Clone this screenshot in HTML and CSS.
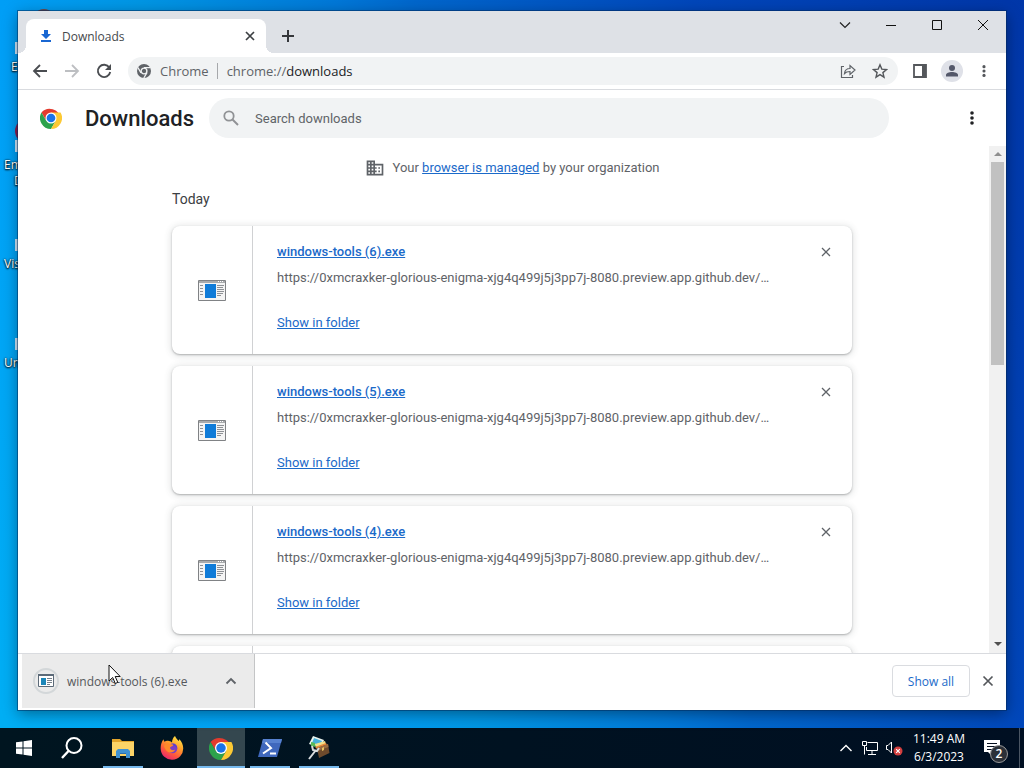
FILE: index.html
```html
<!DOCTYPE html>
<html lang="en">
    <head>
        <meta charset="UTF-8">
        <meta name="viewport" content="width=device-width, initial-scale=1.0">
        <title>Downloads</title>
        <link rel="stylesheet" href="styles.css">
    </head>
    <body>
        <!-- shared icons -->
        <svg class="defs" width="0" height="0">
            <symbol id="chrome" viewBox="0 0 48 48">
                <path fill="#e33b2e" d="M24 24H44.8A24 24 0 0 0 3.2 12L13.6 30z"/>
                <path fill="#2da24c" d="M13.6 30 3.2 12A24 24 0 0 0 24 48L34.4 30z"/>
                <path fill="#fcc934" d="M24 12H44.8A24 24 0 0 1 24 48L34.4 30z"/>
                <circle cx="24" cy="24" r="12" fill="#fff"/>
                <circle cx="24" cy="24" r="9.5" fill="#1a73e8"/>
            </symbol>
            <symbol id="exe" viewBox="0 0 28 21">
                <path fill="#f4f4f4" stroke="#808285" d="M.5.5h27v20H.5z"/>
                <path fill="#a9abad" d="M1 1h26v2H1z"/>
                <path fill="#fff" d="M20 1h1v1h-1zM22 1h1v1h-1zM24 1h1v1h-1z"/>
                <path fill="#0f7bd8" d="M7 4h11v14H7z"/>
                <path stroke="#8d9094" d="M2 5.5h3M2 8.5h3M2 11.5h3M2 14.5h3M19 5.5h7M19 7.5h6M19 9.5h7M19 11.5h7M19 13.5h6M19 15.5h4"/>
            </symbol>
            <symbol id="dots" viewBox="0 0 16 16">
                <circle cx="8" cy="3" r="1.8"/><circle cx="8" cy="8" r="1.8"/><circle cx="8" cy="13" r="1.8"/>
            </symbol>
            <symbol id="cross" viewBox="0 0 10 10">
                <path d="M1 1l8 8M9 1L1 9" fill="none" stroke="currentColor" stroke-width="1.3"/>
            </symbol>
        </svg>

        <div class="desktop">
            <svg class="app-icon app-icon-1" width="24" height="24"><circle cx="12" cy="12" r="12" fill="#6b4a4e"/></svg>
            <svg class="app-icon app-icon-2" width="24" height="24"><circle cx="12" cy="12" r="12" fill="#8c1d4f"/></svg>
            <div class="shortcut shortcut-1"><i></i>Ex</div>
            <div class="shortcut shortcut-2"><i></i>Em<br><span>D</span></div>
            <div class="shortcut shortcut-3"><i></i>Vis</div>
            <div class="shortcut shortcut-4"><i></i>Un</div>

            <div class="window">
                <div class="titlebar">
                    <div class="tab">
                        <svg width="12" height="14" viewBox="0 0 12 14"><path fill="#1967d2" d="M4 1h4v4h3L6 10 1 5h3zM1 11h10v2H1z"/></svg>
                        <span>Downloads</span>
                        <button aria-label="Close tab"><svg width="10" height="10" viewBox="0 0 10 10"><path d="M1 1l8 8M9 1L1 9" stroke="#3c4043" stroke-width="1.700"/></svg></button>
                    </div>
                    <button class="new-tab" aria-label="New tab"><svg width="14" height="14"><path d="M7 1v12M1 7h12" stroke="#35373b" stroke-width="2"/></svg></button>
                    <div class="controls">
                        <button aria-label="Search tabs"><svg width="12" height="12"><path d="M1 3.500l5 5 5-5" fill="none" stroke="#222" stroke-width="1.200"/></svg></button>
                        <button aria-label="Minimize"><svg width="12" height="12"><path d="M1 6.500h10" stroke="#111"/></svg></button>
                        <button aria-label="Maximize"><svg width="12" height="12"><path d="M1.500 1.500h9v9h-9z" fill="none" stroke="#111"/></svg></button>
                        <button aria-label="Close"><svg width="12" height="12"><path d="M1 1l10 10M11 1L1 11" stroke="#111"/></svg></button>
                    </div>
                </div>

                <div class="toolbar">
                    <button aria-label="Back"><svg width="16" height="16"><path d="M15 8H2M8 2L2 8l6 6" fill="none" stroke="#4a4d51" stroke-width="1.800"/></svg></button>
                    <button aria-label="Forward" disabled><svg width="16" height="16"><path d="M1 8h13M8 2l6 6-6 6" fill="none" stroke="#bdbfc2" stroke-width="1.800"/></svg></button>
                    <button aria-label="Reload"><svg width="16" height="16"><path d="M13.300 4.500A6.200 6.200 0 1 0 14.200 9" fill="none" stroke="#4a4d51" stroke-width="1.900"/><path d="M15 1v6H9z" fill="#4a4d51"/></svg></button>
                    <div class="omnibox">
                        <svg width="16" height="16" viewBox="0 0 16 16"><circle cx="8" cy="8" r="7" fill="#5f6368"/><circle cx="8" cy="8" r="2.900" fill="none" stroke="#f1f3f4" stroke-width="1.400"/><path d="M8 4.600h6.500M5 9.800L1.900 4.500M11 9.700L7.800 15" stroke="#f1f3f4" stroke-width="1.300"/></svg>
                        <span class="origin">Chrome</span>
                        <span class="url">chrome://<b>downloads</b></span>
                        <button aria-label="Share"><svg width="16" height="16"><path d="M4 3.500H1.500v11h11V12M4.500 10.500c.3-3 2-5 5.500-5V2.500l5 4.500-5 4.500v-3c-2.500 0-4.200.5-5.500 2z" fill="none" stroke="#5f6368" stroke-width="1.200"/></svg></button>
                        <button aria-label="Bookmark this tab"><svg width="16" height="16"><path d="M8 1.800l1.800 4.300 4.700.4-3.600 3.100 1.100 4.600L8 11.700l-4 2.500 1.100-4.600-3.600-3.100 4.700-.4z" fill="none" stroke="#54575b" stroke-width="1.400"/></svg></button>
                    </div>
                    <button aria-label="Side panel"><svg width="14" height="14"><path d="M1 1h12v12H1z" fill="none" stroke="#54575b" stroke-width="1.800"/><path d="M9 1h4v12H9z" fill="#54575b"/></svg></button>
                    <button class="avatar" aria-label="Profile"><svg width="22" height="22"><circle cx="11" cy="11" r="11" fill="#dfe1e8"/><circle cx="11" cy="8" r="3" fill="#54586a"/><path d="M5 16.500v-1.500c0-2 3-3 6-3s6 1 6 3v1.500z" fill="#54586a"/></svg></button>
                    <button aria-label="Menu"><svg width="16" height="14" fill="#54575b"><use href="#dots"/></svg></button>
                </div>

                <header class="page-header">
                    <svg width="24" height="24"><use href="#chrome" x="1" y="1" width="22" height="22"/></svg>
                    <h1>Downloads</h1>
                    <label class="search">
                        <svg width="16" height="16"><circle cx="6" cy="6" r="4.700" fill="none" stroke="#909295" stroke-width="1.800"/><path d="M9.500 9.500l5.500 5.500" stroke="#909295" stroke-width="2"/></svg>
                        <input type="search" placeholder="Search downloads" aria-label="Search downloads">
                    </label>
                    <button aria-label="More actions"><svg width="16" height="16" fill="#202124"><use href="#dots"/></svg></button>
                </header>

                <div class="page">
                    <main class="list">
                        <p class="managed">
                            <svg width="20" height="20" viewBox="0 0 24 24"><path fill="#5f6368" d="M12 7V3H2v18h20V7H12zM6 19H4v-2h2v2zm0-4H4v-2h2v2zm0-4H4V9h2v2zm0-4H4V5h2v2zm4 12H8v-2h2v2zm0-4H8v-2h2v2zm0-4H8V9h2v2zm0-4H8V5h2v2zm10 12h-8v-2h2v-2h-2v-2h2v-2h-2V9h8v10zm-2-8h-2v2h2v-2zm0 4h-2v2h2v-2z"/></svg>
                            <span>Your <a href="#">browser is managed</a> by your organization</span>
                        </p>
                        <h2>Today</h2>
                        <article class="card">
                            <div class="file-icon"><svg width="28" height="21"><use href="#exe"/></svg></div>
                            <div class="details">
                                <a class="name" href="#">windows-tools (6).exe</a>
                                <span class="source">https://0xmcraxker-glorious-enigma-xjg4q499j5j3pp7j-8080.preview.app.github.dev/…</span>
                                <a class="show" href="#">Show in folder</a>
                            </div>
                            <button aria-label="Remove from list"><svg width="10" height="10"><use href="#cross"/></svg></button>
                        </article>
                        <article class="card">
                            <div class="file-icon"><svg width="28" height="21"><use href="#exe"/></svg></div>
                            <div class="details">
                                <a class="name" href="#">windows-tools (5).exe</a>
                                <span class="source">https://0xmcraxker-glorious-enigma-xjg4q499j5j3pp7j-8080.preview.app.github.dev/…</span>
                                <a class="show" href="#">Show in folder</a>
                            </div>
                            <button aria-label="Remove from list"><svg width="10" height="10"><use href="#cross"/></svg></button>
                        </article>
                        <article class="card">
                            <div class="file-icon"><svg width="28" height="21"><use href="#exe"/></svg></div>
                            <div class="details">
                                <a class="name" href="#">windows-tools (4).exe</a>
                                <span class="source">https://0xmcraxker-glorious-enigma-xjg4q499j5j3pp7j-8080.preview.app.github.dev/…</span>
                                <a class="show" href="#">Show in folder</a>
                            </div>
                            <button aria-label="Remove from list"><svg width="10" height="10"><use href="#cross"/></svg></button>
                        </article>
                        <article class="card">
                            <div class="file-icon"></div>
                        </article>
                    </main>
                    <div class="scrollbar">
                        <svg width="17" height="16"><path d="M5 10h8L9 6z" fill="#8f8f8f"/></svg>
                        <div class="thumb"></div>
                        <svg width="17" height="16"><path d="M5 5h8L9 9z" fill="#505050"/></svg>
                    </div>
                </div>

                <footer class="shelf">
                    <div class="item">
                        <svg width="26" height="26"><circle cx="13" cy="13" r="12" fill="none" stroke="#d3d7d9" stroke-width="2"/><path d="M5.500 6.500h15v12h-15z" fill="#fff" stroke="#5c6a78"/><path d="M5 6h16v2H5z" fill="#5c6a78"/><path d="M8 10h5v7H8z" fill="#1c86b8"/><path d="M14 10.500h5M14 12.500h5M14 14.500h5M14 16.500h3" stroke="#75808b"/></svg>
                        <a href="#">windows-tools (6).exe</a>
                        <button aria-label="Options"><svg width="12" height="12"><path d="M1.500 8.500L6 4l4.500 4.500" fill="none" stroke="#5f6368" stroke-width="1.800"/></svg></button>
                    </div>
                    <button class="show-all">Show all</button>
                    <button aria-label="Close shelf"><svg width="12" height="12"><path d="M1.500 1.500l9 9M10.500 1.500l-9 9" stroke="#54575b" stroke-width="1.700"/></svg></button>
                </footer>
            </div>

            <svg class="cursor" width="14" height="21"><path d="M1 1v16l3.700-3.500 2.600 6 2.500-1.100-2.600-5.900h5z" fill="#fff" stroke="#111"/></svg>
        </div>

        <nav class="taskbar">
            <button aria-label="Start"><svg width="16" height="16" fill="#fff"><path d="M0 2.300L6.500 1.400v6.100H0zM7.500 1.200L16 0v7.500H7.500zM0 8.500h6.500v6.100L0 13.700zM7.500 8.500H16V16l-8.500-1.200z"/></svg></button>
            <button aria-label="Search"><svg width="24" height="24"><circle cx="14" cy="9.500" r="7.500" fill="none" stroke="#fff" stroke-width="2"/><path d="M8.500 15L2 22" stroke="#fff" stroke-width="2.400"/></svg></button>
            <div class="apps">
                <button class="running" aria-label="File Explorer"><svg width="22" height="20"><path fill="#e3a52b" d="M0 1h8l2 2h12v15H0z"/><path fill="#fcd467" d="M0 4h22v14H0z"/><path fill="#3f92d2" d="M4 20v-7l2-2h10l2 2v7h-4v-4H8v4z"/><path fill="#2b6fae" d="M8 15h6v1H8z"/></svg></button>
                <button aria-label="Firefox"><svg width="24" height="24">
                    <defs>
                        <linearGradient id="fox" x1=".85" y1="0" x2=".3" y2="1"><stop offset="0" stop-color="#fff04a"/><stop offset=".4" stop-color="#ffa02a"/><stop offset=".7" stop-color="#ff5a3c"/><stop offset="1" stop-color="#e8256f"/></linearGradient>
                    </defs>
                    <path fill="url(#fox)" d="M15 0c1.200 2.500 2.600 3.600 3.600 5 .6-.6.700-1.200.6-2 2.500 2.300 4 5.800 4 9.200A11.200 11.200 0 0 1 .7 13C.5 9.500 1.300 6 3.500 3.200c.1 1.100.5 2 1.100 2.600C5.600 4.700 7.300 4.400 9 5c1.400.2 2.300.8 3 1.500C12 4 13 1.500 15 0z"/>
                    <circle cx="12.500" cy="12.500" r="4.800" fill="#7a3fc4"/>
                    <path fill="#5b3fd0" d="M11 8c3-1.500 6.500.8 6.300 4.500-1-2-3-3-5-3z"/>
                    <path fill="#ff8a2a" d="M4 10c1.500-2.600 4.600-3.200 7-1.700 1.300 0 2.600.4 2.200 1.300-.9.900-2.700 1-3.200 2.200.3 2 2.500 3.200 5 2-1.200 3.200-6.300 3.900-9 .4C5 13 4.300 11.500 4 10z"/>
                </svg></button>
                <button class="running active" aria-label="Google Chrome"><svg width="24" height="24"><use href="#chrome"/></svg></button>
                <button class="running" aria-label="PowerShell"><svg width="24" height="20"><path fill="#3f68bd" d="M5 1h19l-5 18H0z"/><path fill="#5681d0" d="M5 1h19l-1 4H4z"/><path d="M7.500 4.500L13 10l-8 5.500M12 15.500h6" fill="none" stroke="#fff" stroke-width="2"/></svg></button>
                <button class="running" aria-label="Tools"><svg width="22" height="24">
                    <path fill="#e9f3ee" d="M5 0l11 4-3 8L1 8z"/>
                    <path fill="#46b0dc" d="M6 2l8 3-2 4-8-2z"/>
                    <path fill="#58b957" d="M3 6l4 1 1 4-5-1z"/>
                    <path fill="#f0e08a" d="M7 8l10-3 1 3-9 4z"/>
                    <path fill="#e8893a" d="M7 11l11-4 1 2-10 4z"/>
                    <path fill="#6d4a2c" d="M9 12l11-4 1.500 9L11 22z"/>
                    <path fill="#9a6c40" d="M9 12l11-4 .5 3L9.500 15z"/>
                    <path fill="#e8c460" d="M14 12l2-1v3l-2 1z"/>
                    <path d="M1 23l7-9M4 10l1 4 4 1 2-3" fill="none" stroke="#d9dcde" stroke-width="2"/>
                </svg></button>
            </div>
            <div class="tray">
                <button aria-label="Show hidden icons"><svg width="14" height="10"><path d="M1.500 8L7 2.500 12.500 8" fill="none" stroke="#fff" stroke-width="1.400"/></svg></button>
                <button aria-label="Network"><svg width="16" height="14"><path d="M5.500 1.500h10v8h-11V6M10 10v3M6 13.500h8M.5.500h4v4h-4zM2.500 4.500v9" fill="none" stroke="#fff"/></svg></button>
                <button aria-label="Volume"><svg width="18" height="16"><path d="M1.500 5.500H3L6.500 2v11L3 9.500H1.500z" fill="none" stroke="#fff"/><circle cx="13" cy="11" r="4.500" fill="#d33f3f"/><path d="M11.200 9.200l3.600 3.600M14.800 9.200l-3.600 3.600" stroke="#fff" stroke-width="1.200"/></svg></button>
                <time class="clock"><span>11:49 AM</span><span>6/3/2023</span></time>
                <button class="notifications" aria-label="Notifications"><svg width="16" height="16"><path d="M0 0h16v12H8v4l-4-4H0z" fill="#fff"/><path d="M3 3.500h10M3 6.500h10M3 9.500h6" stroke="#06101f"/></svg><span>2</span></button>
                <button class="peek" aria-label="Show desktop"></button>
            </div>
        </nav>
    </body>
</html>
```
FILE: styles.css
```css
:root {
    --system-font: "Open Sans", "Noto Sans", sans-serif;
    --page-font: Roboto, "Liberation Sans", sans-serif;
    --link: #1b6ac9;
    --gray: #5f6368;
}
* {
    box-sizing: border-box;
}
body {
    margin: 0;
    height: 100vh;
    display: flex;
    flex-direction: column;
    overflow: hidden;
    font-family: var(--system-font);
    font-size: 12px;
    background: linear-gradient(65deg, #00aef4 2%, #009ef6 26%, #0096e4 36%, #0078d8 50%, #0066cc 56%, #0046ba 76%, #0036a8 100%);
}
button {
    display: flex;
    align-items: center;
    justify-content: center;
    padding: 0;
    border: 0;
    background: none;
    font: inherit;
    color: #3c4043;
}
svg {
    flex: none;
    display: block;
}
.defs {
    position: absolute;
}

/* desktop */
.desktop {
    flex: 1;
    min-height: 0;
    position: relative;
}
.shortcut {
    position: absolute;
    left: 4px;
    color: #fff;
    line-height: 16px;
    text-shadow: 0 1px 2px #000, 0 0 2px #000;
}
.shortcut i {
    display: block;
    width: 4px;
    height: 12px;
    margin: 0 0 5px 11px;
    background: #cfe6f8;
}
.shortcut span {
    margin-left: 10px;
}
.shortcut-1 {
    top: 42px;
    left: 11px;
}
.shortcut-1 i {
    margin-left: 4px;
}
.shortcut-2 {
    top: 140px;
}
.shortcut-3 {
    top: 239px;
}
.shortcut-4 {
    top: 338px;
}
.app-icon {
    position: absolute;
}
.app-icon-1 {
    left: 32px;
    top: 9px;
}
.app-icon-2 {
    left: 15px;
    top: 119px;
}
.window {
    position: absolute;
    inset: 11px 18px 18px;
    display: flex;
    flex-direction: column;
    background: #fff;
    box-shadow: 0 0 0 1px rgba(0, 40, 90, 0.5), 0 4px 14px rgba(0, 0, 0, 0.4);
}
.cursor {
    position: absolute;
    left: 108px;
    top: 664px;
}

/* tab strip */
.titlebar {
    display: flex;
    align-items: flex-end;
    height: 42px;
    padding-left: 8px;
    background: #dee1e6;
}
.tab {
    position: relative;
    display: flex;
    align-items: center;
    width: 240px;
    height: 34px;
    padding: 0 11px 0 14px;
    border-radius: 8px 8px 0 0;
    background: #fff;
    color: #45484c;
}
.tab::before,
.tab::after {
    content: "";
    position: absolute;
    bottom: 0;
    left: -8px;
    width: 8px;
    height: 8px;
    background: radial-gradient(circle at 0 0, #dee1e6 8px, #fff 8px);
}
.tab::after {
    left: auto;
    right: -8px;
    background: radial-gradient(circle at 100% 0, #dee1e6 8px, #fff 8px);
}
.tab span {
    flex: 1;
    margin-left: 10px;
}
.new-tab {
    width: 28px;
    height: 34px;
    margin-left: 8px;
}
.controls {
    display: flex;
    align-self: flex-start;
    margin-left: auto;
}
.controls button {
    width: 46px;
    height: 28px;
}

/* toolbar */
.toolbar {
    display: flex;
    align-items: center;
    height: 37px;
    padding: 0 6px;
    border-bottom: 1px solid #d9dbdf;
}
.toolbar button {
    width: 32px;
    height: 28px;
}
.omnibox {
    flex: 1;
    display: flex;
    align-items: center;
    height: 28px;
    margin: 0 6px 0 8px;
    padding: 0 2px 0 8px;
    border-radius: 14px;
    background: #f1f3f4;
    font-size: 13px;
    color: var(--gray);
}
.origin {
    margin-left: 8px;
    padding-right: 8px;
    border-right: 1px solid #a6a8ab;
    line-height: 16px;
}
.url {
    flex: 1;
    margin-left: 9px;
}
.url b {
    font-weight: normal;
    color: #202124;
}

/* downloads page */
.page-header {
    display: flex;
    align-items: center;
    height: 56px;
    padding: 0 18px 0 21px;
    font-family: var(--page-font);
}
.page-header h1 {
    margin: 0 15px 0 22px;
    font-size: 22px;
    font-weight: 500;
    color: #202124;
}
.page-header button {
    width: 32px;
    height: 32px;
    margin-left: auto;
}
.search {
    flex: 0 1 680px;
    display: flex;
    align-items: center;
    height: 40px;
    padding: 0 14px;
    border-radius: 20px;
    background: #f1f3f4;
}
.search input {
    flex: 1;
    margin-left: 16px;
    padding: 0;
    border: 0;
    outline: 0;
    background: none;
    font-family: inherit;
    font-size: 13px;
}
.search input::placeholder {
    color: #606468;
}
.page {
    flex: 1;
    min-height: 0;
    display: flex;
    overflow: hidden;
    font-family: var(--page-font);
    font-size: 13px;
    color: var(--gray);
}
.page a {
    color: var(--link);
}
.list {
    flex: 1;
    display: flex;
    flex-direction: column;
    align-items: center;
    padding: 11px 0 0 17px;
}
.managed {
    display: flex;
    align-items: center;
    gap: 8px;
    margin: 0;
    line-height: 22px;
}
.list h2 {
    width: 100%;
    max-width: 680px;
    margin: 10px 0 17px;
    font-size: 14px;
    font-weight: 400;
    line-height: 20px;
    color: #3c4043;
}
.card {
    flex: none;
    display: flex;
    width: 100%;
    max-width: 680px;
    height: 128px;
    margin-bottom: 12px;
    border-radius: 8px;
    background: #fff;
    box-shadow: 0 1px 2px rgba(60, 64, 67, 0.35), 0 1px 6px 2px rgba(60, 64, 67, 0.12);
}
.file-icon {
    display: flex;
    align-items: center;
    justify-content: center;
    width: 81px;
    border-right: 1px solid #d0d1d3;
}
.details {
    flex: 1;
    display: flex;
    flex-direction: column;
    align-items: flex-start;
    padding: 16px 0 0 24px;
    line-height: 20px;
}
.name {
    font-weight: 500;
}
.source {
    margin-top: 6px;
}
.show {
    margin-top: 25px;
}
.card button {
    width: 32px;
    height: 32px;
    margin: 10px 10px 0 0;
    color: var(--gray);
}
.scrollbar {
    display: flex;
    flex-direction: column;
    width: 17px;
    background: #f1f1f1;
}
.thumb {
    height: 40%;
    margin: 0 2px auto;
    background: #c1c1c1;
}

/* download shelf */
.shelf {
    display: flex;
    align-items: center;
    height: 57px;
    padding: 0 2px 2px 4px;
    border-top: 1px solid #d9dbdf;
}
.item {
    display: flex;
    align-items: center;
    width: 233px;
    height: 100%;
    margin-right: auto;
    padding: 0 7px 0 11px;
    border-right: 1px solid #c4c5c6;
    background: #ebebeb;
}
.item a {
    flex: 1;
    margin-left: 8px;
    color: #55585c;
    text-decoration: none;
}
.shelf button {
    width: 32px;
    height: 32px;
}
.shelf .show-all {
    width: 78px;
    margin-right: 2px;
    border: 1px solid #dadce0;
    border-radius: 4px;
    color: var(--link);
}

/* taskbar */
.taskbar {
    display: flex;
    height: 40px;
    background: linear-gradient(90deg, #001520, #000f22);
    color: #fff;
}
.taskbar button {
    width: 48px;
    height: 40px;
}
.apps {
    display: flex;
    gap: 1px;
    margin-left: 3px;
}
.running {
    background: linear-gradient(#76b9ed, #76b9ed) bottom / 40px 2px no-repeat;
}
.running.active {
    background-color: #34474f;
    background-size: 100% 2px;
}
.tray {
    display: flex;
    align-items: center;
    margin-left: auto;
}
.taskbar .tray button {
    width: 24px;
}
.clock {
    display: flex;
    flex-direction: column;
    width: 66px;
    text-align: center;
    line-height: 18px;
}
.taskbar .tray .notifications {
    position: relative;
    width: 40px;
}
.notifications span {
    position: absolute;
    right: 4px;
    bottom: 5px;
    width: 18px;
    height: 18px;
    border: 1px solid #999;
    border-radius: 50%;
    background: #2b3038;
    color: #fff;
    font-size: 12px;
    font-weight: 600;
    line-height: 16px;
}
.taskbar .tray .peek {
    width: 5px;
    margin-left: 7px;
    border-left: 1px solid #4a5563;
}
```
